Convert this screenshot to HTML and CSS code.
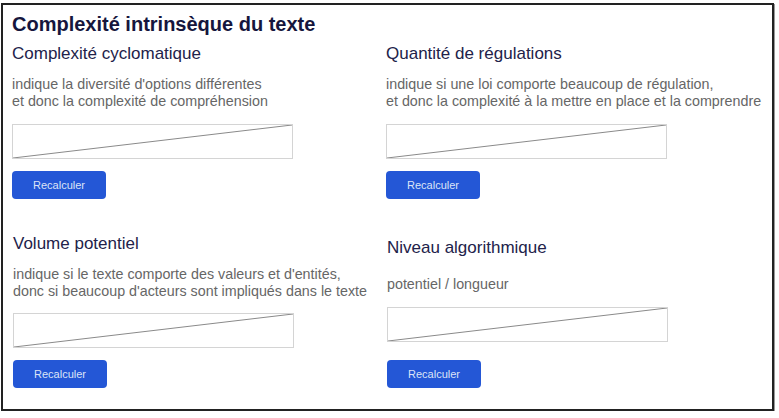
FILE: index.html
```html
<!DOCTYPE html>
<html>
<head>
  <title>Complexité intrinsèque du texte</title>
  <link rel="stylesheet" href="styles.css">
</head>
<body>
  <div class="panel">
    <h2 class="panel-title">Complexité intrinsèque du texte</h2>

    <div class="metrics">
      <section class="metric">
        <h3>Complexité cyclomatique</h3>
        <p>indique la diversité d'options différentes<br>et donc la complexité de compréhension</p>
        <div class="result">
          <svg viewBox="0 0 100 100" preserveAspectRatio="none"><line x1="0" y1="100" x2="100" y2="0" vector-effect="non-scaling-stroke"/></svg>
        </div>
        <button>Recalculer</button>
      </section>

      <section class="metric">
        <h3>Quantité de régulations</h3>
        <p>indique si une loi comporte beaucoup de régulation,<br>et donc la complexité à la mettre en place et la comprendre</p>
        <div class="result">
          <svg viewBox="0 0 100 100" preserveAspectRatio="none"><line x1="0" y1="100" x2="100" y2="0" vector-effect="non-scaling-stroke"/></svg>
        </div>
        <button>Recalculer</button>
      </section>

      <section class="metric metric-low">
        <h3>Volume potentiel</h3>
        <p>indique si le texte comporte des valeurs et d'entités,<br>donc si beaucoup d'acteurs sont impliqués dans le texte</p>
        <div class="result">
          <svg viewBox="0 0 100 100" preserveAspectRatio="none"><line x1="0" y1="100" x2="100" y2="0" vector-effect="non-scaling-stroke"/></svg>
        </div>
        <button>Recalculer</button>
      </section>

      <section class="metric metric-low metric-short">
        <h3>Niveau algorithmique</h3>
        <p>potentiel / longueur</p>
        <div class="result">
          <svg viewBox="0 0 100 100" preserveAspectRatio="none"><line x1="0" y1="100" x2="100" y2="0" vector-effect="non-scaling-stroke"/></svg>
        </div>
        <button>Recalculer</button>
      </section>
    </div>
  </div>
</body>
</html>
```

FILE: styles.css
```css
body {
  margin: 0;
  background: #fff;
  font-family: "Liberation Sans", Arial, sans-serif;
}
.panel {
  margin: 3px 5px 0 1px;
  height: 408px;
  box-sizing: border-box;
  border: 2px solid #222;
  box-shadow: 1px 1px 0 #999;
  padding: 8px 9px 0 9px;
}
.panel-title {
  margin: 0;
  font-size: 20px;
  line-height: 22px;
  font-weight: bold;
  color: #16163d;
}
.metrics {
  display: grid;
  grid-template-columns: 374px 1fr;
  margin-top: 9px;
}
.metric h3 {
  margin: 0;
  font-size: 17px;
  line-height: 20px;
  font-weight: normal;
  color: #22224a;
}
.metric p {
  margin: 12px 0 0;
  font-size: 14.3px;
  line-height: 17px;
  color: #666;
}
.result {
  width: 281px;
  height: 35px;
  margin-top: 14px;
  box-sizing: border-box;
  border: 1px solid #d4d4d4;
}
.result svg {
  display: block;
  width: 100%;
  height: 100%;
}
.result line {
  stroke: #8a8a8a;
  stroke-width: 1;
}
button {
  display: block;
  width: 94px;
  height: 28px;
  margin-top: 12px;
  border: none;
  border-radius: 4px;
  background: #2457d6;
  color: #dce4f7;
  font-family: "Liberation Sans", Arial, sans-serif;
  font-size: 11px;
  cursor: pointer;
}
.metric-low {
  margin-top: 35px;
  padding-left: 1px;
}
.metric-low .result {
  margin-top: 13px;
}
.metric-short {
  padding-top: 4px;
}
.metric-short p {
  margin-top: 18px;
}
.metric-short .result {
  margin-top: 14px;
}
.metric-short button {
  margin-top: 18px;
}
```
